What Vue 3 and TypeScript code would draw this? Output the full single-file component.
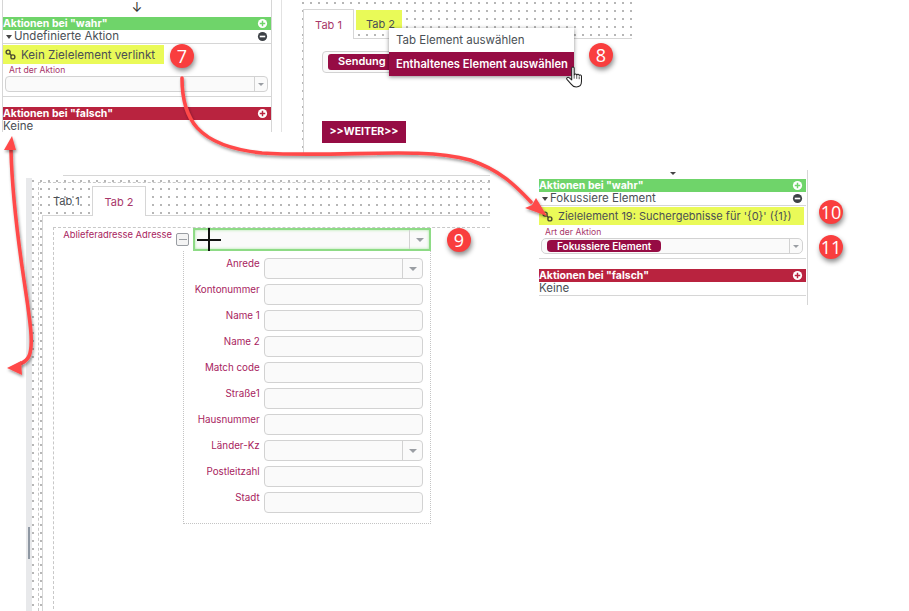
<template>
  <div class="collage">
    <!-- left top: action panel, nothing linked yet -->
    <section class="pane pane-a">
      <div class="down-arrow">↓</div>
      <div class="bar bar-green">
        <span>Aktionen bei "wahr"</span>
        <svg class="round-icon" viewBox="0 0 12 12"><circle cx="6" cy="6" r="5" fill="#fff" /><path d="M3 6h6M6 3v6" stroke="#6fd46a" stroke-width="1.6" /></svg>
      </div>
      <div class="action-row">
        <span><i class="caret"></i>Undefinierte Aktion</span>
        <svg class="round-icon" viewBox="0 0 12 12"><circle cx="6" cy="6" r="5" fill="#3d4146" /><path d="M3 6h6" stroke="#fff" stroke-width="1.8" /></svg>
      </div>
      <div class="link-note link-note-a">
        <svg class="link-icon" viewBox="0 0 12 12"><circle cx="3.4" cy="3.4" r="2.2" /><circle cx="8.6" cy="8.6" r="2.2" /><path d="M5 5l2 2" /></svg>
        Kein Zielelement verlinkt
      </div>
      <div class="small-label">Art der Aktion</div>
      <div class="select select-action"><span class="select-text"></span><span class="select-btn"><i></i></span></div>
      <div class="bar bar-red bar-red-a">
        <span>Aktionen bei "falsch"</span>
        <svg class="round-icon" viewBox="0 0 12 12"><circle cx="6" cy="6" r="5" fill="#fff" /><path d="M3 6h6M6 3v6" stroke="#b9233f" stroke-width="1.6" /></svg>
      </div>
      <div class="none-row">Keine</div>
    </section>

    <!-- top middle: tabs with context menu -->
    <section class="pane pane-b">
      <div class="tabs tabs-b">
        <div class="tab tab-active">Tab 1</div>
        <div class="tab tab-marked">Tab 2</div>
      </div>
      <div class="tab-body">
        <div class="select select-send"><span class="pill">Sendung</span></div>
        <div class="next-btn">&gt;&gt;WEITER&gt;&gt;</div>
      </div>
      <div class="menu">
        <div class="menu-item">Tab Element auswählen</div>
        <div class="menu-item menu-item-on">Enthaltenes Element auswählen</div>
      </div>
    </section>

    <!-- right: action panel with target set -->
    <section class="pane pane-c">
      <i class="top-tick"></i>
      <div class="bar bar-green">
        <span>Aktionen bei "wahr"</span>
        <svg class="round-icon" viewBox="0 0 12 12"><circle cx="6" cy="6" r="5" fill="#fff" /><path d="M3 6h6M6 3v6" stroke="#6fd46a" stroke-width="1.6" /></svg>
      </div>
      <div class="action-row">
        <span><i class="caret"></i>Fokussiere Element</span>
        <svg class="round-icon" viewBox="0 0 12 12"><circle cx="6" cy="6" r="5" fill="#3d4146" /><path d="M3 6h6" stroke="#fff" stroke-width="1.8" /></svg>
      </div>
      <div class="link-note link-note-c">
        <svg class="link-icon" viewBox="0 0 12 12"><circle cx="3.4" cy="3.4" r="2.2" /><circle cx="8.6" cy="8.6" r="2.2" /><path d="M5 5l2 2" /></svg>
        Zielelement 19: Suchergebnisse für '{0}' ({1})
      </div>
      <div class="small-label small-label-c">Art der Aktion</div>
      <div class="select select-action select-focus">
        <span class="select-text"><span class="pill pill-focus">Fokussiere Element</span></span>
        <span class="select-btn"><i></i></span>
      </div>
      <div class="bar bar-red bar-red-c">
        <span>Aktionen bei "falsch"</span>
        <svg class="round-icon" viewBox="0 0 12 12"><circle cx="6" cy="6" r="5" fill="#fff" /><path d="M3 6h6M6 3v6" stroke="#b9233f" stroke-width="1.6" /></svg>
      </div>
      <div class="none-row none-row-c">Keine</div>
    </section>

    <!-- bottom left: form designer -->
    <section class="pane pane-d">
      <div class="top-rule"></div>
      <div class="designer">
        <div class="band"><i class="band-thumb"></i></div>
        <div class="canvas">
          <div class="canvas-frame">
            <div class="tabs tabs-d">
              <div class="tab tab-plain">Tab 1</div>
              <div class="tab tab-active tab-active-d">Tab 2</div>
            </div>
            <div class="tab-body-d">
              <div class="drop-box">
                <div class="addr-row">
                  <div class="addr-label">Ablieferadresse Adresse</div>
                  <span class="collapse-box"><i></i></span>
                  <div class="select select-green"><span class="select-text"></span><span class="select-btn"><i></i></span></div>
                </div>
                <div class="subform">
                  <div v-for="field in fields" :key="field.label" class="field-row">
                    <label class="field-label">{{ field.label }}</label>
                    <div class="select field-input">
                      <span class="select-text"></span>
                      <span v-if="field.combo" class="select-btn"><i></i></span>
                    </div>
                  </div>
                </div>
              </div>
            </div>
          </div>
        </div>
      </div>
    </section>

    <!-- annotation layer -->
    <svg class="arrows" viewBox="0 0 909 611">
      <defs>
        <filter id="arrow-shadow" x="-20%" y="-20%" width="140%" height="140%">
          <feDropShadow dx="1" dy="2" stdDeviation="1.6" flood-color="#000" flood-opacity="0.4" />
        </filter>
      </defs>
      <g filter="url(#arrow-shadow)" fill="none" stroke="#ff4a4a" stroke-linecap="round">
        <path d="M182 78C182 118 196 146 262 153C340 158 420 146 470 160C500 170 515 185 531 202" stroke-width="3.6" />
        <path d="M11 150C12 190 18 240 24 280C30 320 34 345 29 356C27 361 24 362 20 364" stroke-width="3.6" />
      </g>
      <g filter="url(#arrow-shadow)" fill="#ff4a4a">
        <path d="M547 216L525 208L532 205L536 198Z" />
        <path d="M12 136L4 150L16 150Z" />
        <path d="M7 368L21 361L22 375Z" />
      </g>
    </svg>

    <div class="crosshair"></div>

    <svg class="hand" viewBox="0 0 20 24">
      <path d="M6 2.2c0-1.6 2.6-1.6 2.6 0v7c.6-1.4 2.6-1.2 2.7.2.6-1.2 2.5-1 2.6.4.8-.9 2.4-.5 2.4 1v5.2c0 3.6-2.2 6-5.5 6-2.6 0-4-1-5.4-3L1 14c-1-1.6 1-3 2.2-1.8L6 14.5z" fill="#fff" stroke="#222" stroke-width="1.1" stroke-linejoin="round" />
      <path d="M8.6 9.2v4M11.3 9.4v4M13.9 10.8v3" stroke="#222" stroke-width=".8" />
    </svg>

    <span v-for="b in badges" :key="b.n" class="badge" :style="{ left: `${b.x - 12}px`, top: `${b.y - 12}px` }">{{ b.n }}</span>
  </div>
</template>

<script setup lang="ts">
  const fields = [
    { label: "Anrede", combo: true },
    { label: "Kontonummer", combo: false },
    { label: "Name 1", combo: false },
    { label: "Name 2", combo: false },
    { label: "Match code", combo: false },
    { label: "Straße1", combo: false },
    { label: "Hausnummer", combo: false },
    { label: "Länder-Kz", combo: true },
    { label: "Postleitzahl", combo: false },
    { label: "Stadt", combo: false },
  ]

  const badges = [
    { n: 7, x: 182, y: 56 },
    { n: 8, x: 601, y: 55 },
    { n: 9, x: 459, y: 240 },
    { n: 10, x: 831, y: 212 },
    { n: 11, x: 831, y: 247 },
  ]
</script>

<style scoped>
  .collage {
    position: relative;
    width: 909px;
    height: 611px;
    overflow: hidden;
    background: #fff;
    font-family: Inter, "Liberation Sans", sans-serif;
    font-size: 11px;
    color: #4a4f55;
  }

  .pane {
    position: absolute;
    box-sizing: border-box;
  }

  /* shared action panel parts */
  .bar {
    display: flex;
    align-items: center;
    justify-content: space-between;
    height: 13px;
    padding-right: 3px;
    font-weight: 700;
    font-size: 10.5px;
    line-height: 13px;
    color: #fff;
  }
  .bar-green {
    background: #6fd46a;
  }
  .bar-red {
    background: #b9233f;
  }
  .round-icon {
    width: 11px;
    height: 11px;
  }
  .action-row {
    display: flex;
    align-items: center;
    justify-content: space-between;
    height: 13px;
    padding-right: 3px;
    border-bottom: 1px solid #d6d6d6;
    font-size: 11.5px;
    line-height: 13px;
  }
  .caret {
    display: inline-block;
    margin: 0 2px 1px 3px;
    border-left: 3px solid transparent;
    border-right: 3px solid transparent;
    border-top: 4px solid #444;
  }
  .link-note {
    display: flex;
    align-items: center;
    gap: 5px;
    background: #eafa58;
    font-size: 11.6px;
  }
  .link-icon {
    flex: none;
    width: 11px;
    height: 11px;
    fill: none;
    stroke: #4a4a30;
    stroke-width: 1.5;
  }
  .small-label {
    font-size: 8.6px;
    line-height: 10px;
    color: #a8376a;
  }
  .none-row {
    font-size: 11.5px;
    line-height: 13px;
  }

  /* select look */
  .select {
    display: flex;
    box-sizing: border-box;
    border: 1px solid #d2d2d2;
    border-radius: 4px;
    background: #fafafa;
  }
  .select-text {
    flex: 1;
    display: flex;
    align-items: center;
    min-width: 0;
  }
  .select-btn {
    flex: none;
    display: flex;
    align-items: center;
    justify-content: center;
    width: 19px;
    border-left: 1px solid #d2d2d2;
  }
  .select-btn i {
    border-left: 4px solid transparent;
    border-right: 4px solid transparent;
    border-top: 4px solid #9a9ea3;
  }
  .select-action .select-btn {
    width: 12px;
  }
  .select-action .select-btn i {
    border-left-width: 3px;
    border-right-width: 3px;
    border-top-width: 3px;
  }
  .pill {
    display: block;
    background: #960c44;
    color: #fff;
    font-weight: 600;
    border-radius: 3px;
  }

  /* pane A */
  .pane-a {
    left: 0;
    top: 0;
    width: 282px;
    height: 132px;
    padding-left: 3px;
    overflow: hidden;
    border-right: 1px solid #e2e2e2;
  }
  .pane-a > * {
    margin-right: 10px;
  }
  .pane-a::before {
    content: "";
    position: absolute;
    left: 2px;
    top: 0;
    bottom: 0;
    width: 1px;
    background: #d6d6d6;
  }
  .pane-a::after {
    content: "";
    position: absolute;
    left: 271px;
    top: 0;
    bottom: 0;
    width: 1px;
    background: #d6d6d6;
  }
  .down-arrow {
    height: 17px;
    font-size: 13px;
    line-height: 15px;
    color: #333;
    text-align: center;
  }
  .link-note-a {
    width: 161px;
    height: 19px;
    margin-top: 1px;
    padding-left: 2px;
    box-sizing: border-box;
  }
  .pane-a .small-label {
    margin: 1px 0 0 6px;
  }
  .select-action {
    height: 16px;
  }
  .pane-a .select-action {
    margin: 1px 13px 0 2px;
  }
  .bar-red-a {
    position: relative;
    margin-top: 15px;
  }
  .bar-red-a::before {
    content: "";
    position: absolute;
    left: 0;
    right: 0;
    top: -11px;
    height: 1px;
    background: #d6d6d6;
  }

  /* pane B */
  .pane-b {
    left: 302px;
    top: 0;
    width: 330px;
    height: 155px;
    background-image: radial-gradient(circle, #666 0.55px, transparent 0.85px);
    background-size: 8px 8px;
    background-position: -3px -1px;
  }
  .tabs-b {
    display: flex;
    height: 39px;
    padding: 9px 0 0 1px;
    box-sizing: border-box;
    border-bottom: 1px solid #d6d6d6;
  }
  .tab {
    box-sizing: border-box;
    font-size: 11px;
    text-align: center;
  }
  .tab-active {
    width: 51px;
    height: 30px;
    padding-top: 8px;
    background: #fff;
    border: 1px solid #d6d6d6;
    border-bottom: 0;
    color: #a8376a;
  }
  .tab-marked {
    width: 46px;
    height: 20px;
    margin: 1px 0 0 2px;
    padding: 7px 0 0 3px;
    background: #e9fa58;
    color: #4a4f55;
  }
  .tab-body {
    height: 116px;
    margin-left: 1px;
    padding: 12px 0 0 18px;
    box-sizing: border-box;
    background: #fff;
    border-left: 1px solid #d6d6d6;
  }
  .select-send {
    width: 80px;
    height: 22px;
    padding: 2px 0 0 5px;
  }
  .select-send .pill {
    width: 80px;
    height: 16px;
    padding-left: 10px;
    box-sizing: border-box;
    line-height: 15px;
  }
  .next-btn {
    width: 84px;
    height: 22px;
    margin-top: 48px;
    background: #960c44;
    color: #fff;
    font-weight: 700;
    font-size: 10.5px;
    line-height: 22px;
    text-align: center;
  }
  .menu {
    position: absolute;
    left: 87px;
    top: 28px;
    width: 185px;
    background: #fff;
    box-shadow: 0 1px 4px rgba(0, 0, 0, 0.45);
  }
  .menu-item {
    height: 24px;
    padding-left: 7px;
    font-size: 11.5px;
    line-height: 24px;
    white-space: nowrap;
  }
  .menu-item-on {
    background: #960c44;
    color: #fff;
    font-size: 11.2px;
    font-weight: 600;
  }

  /* pane C */
  .pane-c {
    left: 539px;
    top: 170px;
    width: 269px;
    height: 135px;
    padding: 9px 1px 0 0;
    border-right: 1px solid #d6d6d6;
  }
  .top-tick {
    position: absolute;
    left: 131px;
    top: 2px;
    border-left: 3px solid transparent;
    border-right: 3px solid transparent;
    border-top: 3px solid #444;
  }
  .link-note-c {
    height: 18px;
    margin: 1px 2px 0 0;
    padding-left: 3px;
    font-size: 11px;
  }
  .small-label-c {
    margin: 2px 0 0 6px;
  }
  .select-focus {
    margin: 1px 3px 0 2px;
    height: 16px;
    border-radius: 5px;
  }
  .pill-focus {
    width: 114px;
    height: 12px;
    margin-left: 5px;
    padding-left: 10px;
    box-sizing: border-box;
    font-size: 10px;
    line-height: 12px;
    border-radius: 4px;
  }
  .bar-red-c {
    position: relative;
    margin-top: 15px;
  }
  .bar-red-c::before {
    content: "";
    position: absolute;
    left: 0;
    right: 0;
    top: -11px;
    height: 1px;
    background: #d6d6d6;
  }
  .none-row-c {
    border-bottom: 1px solid #d6d6d6;
  }

  /* pane D */
  .pane-d {
    left: 26px;
    top: 175px;
    width: 464px;
    height: 436px;
  }
  .top-rule {
    height: 1px;
    margin: 0 0 2px 37px;
    background: #d6d6d6;
  }
  .designer {
    display: flex;
    height: 433px;
  }
  .band {
    position: relative;
    flex: none;
    width: 6px;
    background: #e8e9eb;
  }
  .band-thumb {
    position: absolute;
    left: 2px;
    top: 349px;
    width: 2px;
    height: 32px;
    background: #8f98a3;
  }
  .canvas {
    flex: 1;
    padding: 4px 0 0 6px;
    background-image: radial-gradient(circle, #666 0.55px, transparent 0.85px);
    background-size: 8px 8px;
    background-position: -3px -1px;
  }
  .canvas-frame {
    height: 100%;
    box-sizing: border-box;
    border-top: 1px dashed #c8c8c8;
    border-left: 1px dashed #c8c8c8;
  }
  .tabs-d {
    display: flex;
    height: 33px;
    padding: 3px 0 0 11px;
    box-sizing: border-box;
    border-bottom: 1px solid #d6d6d6;
    margin-left: 3px;
  }
  .tab-plain {
    width: 39px;
    padding-top: 8px;
    text-align: left;
  }
  .tab-active-d {
    width: 54px;
    height: 30px;
    padding-top: 8px;
  }
  .tab-body-d {
    height: 398px;
    margin-left: 3px;
    padding: 11px 0 0 10px;
    box-sizing: border-box;
    background: #fff;
    border-left: 1px solid #d6d6d6;
  }
  .drop-box {
    height: 100%;
    box-sizing: border-box;
    border-top: 1px dashed #c8c8c8;
    border-left: 1px dashed #c8c8c8;
  }
  .addr-row {
    display: flex;
  }
  .addr-label {
    width: 118px;
    padding-top: 1px;
    font-size: 9.4px;
    line-height: 11px;
    color: #a8235e;
    text-align: right;
    white-space: nowrap;
  }
  .collapse-box {
    flex: none;
    display: flex;
    align-items: center;
    justify-content: center;
    box-sizing: border-box;
    width: 13px;
    height: 13px;
    margin: 5px 4px 0 4px;
    border: 1px solid #9a9ea3;
    border-radius: 2px;
    background: #f4f4f4;
  }
  .collapse-box i {
    width: 8px;
    height: 1px;
    background: #9a9ea3;
  }
  .select-green {
    width: 238px;
    height: 23px;
    border: 2px solid #8edb86;
    border-radius: 0;
    box-shadow: inset 0 0 3px #a7e4a0;
  }
  .subform {
    display: flex;
    flex-direction: column;
    gap: 5px;
    box-sizing: border-box;
    width: 248px;
    margin-left: 129px;
    padding: 7px 7px 10px 0;
    border: 1px dotted #c4c4c4;
    border-top: 0;
  }
  .field-row {
    display: flex;
    gap: 4px;
  }
  .field-label {
    width: 76px;
    font-size: 9.8px;
    line-height: 11px;
    color: #a8235e;
    text-align: right;
    white-space: nowrap;
  }
  .field-input {
    width: 160px;
    height: 21px;
  }

  /* annotations */
  .arrows {
    position: absolute;
    left: 0;
    top: 0;
    width: 909px;
    height: 611px;
    pointer-events: none;
  }
  .crosshair {
    position: absolute;
    left: 197px;
    top: 228px;
    width: 24px;
    height: 23px;
    background:
      linear-gradient(#111, #111) center / 100% 2px no-repeat,
      linear-gradient(#111, #111) center / 2px 100% no-repeat;
  }
  .hand {
    position: absolute;
    left: 566px;
    top: 66px;
    width: 19px;
    height: 23px;
  }
  .badge {
    position: absolute;
    width: 24px;
    height: 24px;
    border-radius: 50%;
    background: #f93e3e;
    box-shadow: 1px 3px 5px rgba(0, 0, 0, 0.45);
    color: #fff;
    font-family: "Open Sans", sans-serif;
    font-size: 18px;
    line-height: 24px;
    text-align: center;
  }
</style>
